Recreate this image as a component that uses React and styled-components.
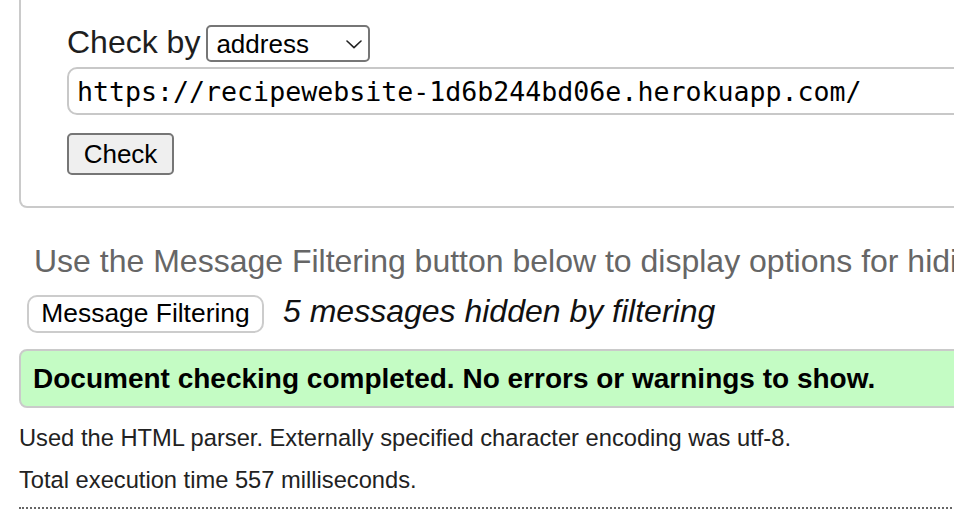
import React from "react";
import styled, { createGlobalStyle } from "styled-components";

const Global = createGlobalStyle`
  html, body { margin: 0; padding: 0; background: #fff; overflow: hidden; }
  body {
    font-family: "Liberation Sans", Arial, Helvetica, sans-serif;
    color: #222;
  }
`;

const Page = styled.main`
  width: 1400px;
  padding-left: 19px;
  box-sizing: border-box;
`;

const Panel = styled.form`
  border: 2px solid #cacaca;
  border-top: none;
  border-radius: 0 0 8px 8px;
  padding: 25px 0 31px 46px;
  display: flex;
  flex-direction: column;
  align-items: flex-start;
`;

const ModeRow = styled.div`
  display: flex;
  align-items: center;
  gap: 6px;
  height: 37px;
`;

const Label = styled.label`
  font-size: 32px;
  line-height: 37px;
  padding-bottom: 3px;
  color: #1e1e1e;
  white-space: nowrap;
`;

const SelectWrap = styled.div`
  position: relative;
  width: 164px;
  height: 37px;
`;

const Select = styled.select`
  appearance: none;
  -webkit-appearance: none;
  width: 100%;
  height: 100%;
  box-sizing: border-box;
  border: 2px solid #767676;
  border-radius: 5px;
  background: #fff;
  color: #000;
  font-family: "Liberation Sans", Arial, sans-serif;
  font-size: 26px;
  padding: 0 0 0 8px;
  margin: 0;
  outline: none;
`;

const Chevron = styled.svg`
  position: absolute;
  right: 8px;
  top: 15px;
  width: 16px;
  height: 9px;
  pointer-events: none;
`;

const UrlInput = styled.input`
  margin-top: 5px;
  width: 1300px;
  height: 48px;
  box-sizing: border-box;
  border: 2px solid #c8c8c8;
  border-radius: 10px;
  padding: 0 8px;
  font-family: "DejaVu Sans Mono", "Liberation Mono", monospace;
  font-size: 26.6px;
  color: #000;
  background: #fff;
  outline: none;
`;

const CheckButton = styled.button`
  margin-top: 18px;
  width: 107px;
  height: 42px;
  box-sizing: border-box;
  border: 2px solid #767676;
  border-radius: 5px;
  background: #efefef;
  color: #000;
  font-family: "Liberation Sans", Arial, sans-serif;
  font-size: 26px;
  padding: 0;
`;

const Hint = styled.p`
  margin: 34.5px 0 0 15px;
  font-size: 32px;
  line-height: 36.8px;
  color: #666;
  white-space: nowrap;
`;

const FilterRow = styled.div`
  margin-top: 15.7px;
  padding-left: 8px;
  display: flex;
  align-items: baseline;
  gap: 19px;
`;

const FilterButton = styled.button`
  width: 237px;
  height: 38px;
  box-sizing: border-box;
  border: 2px solid #cccccc;
  border-radius: 10px;
  background: #fff;
  color: #000;
  font-family: "Liberation Sans", Arial, sans-serif;
  font-size: 26.4px;
  padding: 0;
`;

const HiddenNote = styled.span`
  font-size: 32px;
  font-style: italic;
  line-height: 30px;
  color: #111;
  white-space: nowrap;
`;

const Result = styled.div`
  margin-top: 16px;
  border: 2px solid #cacaca;
  border-radius: 8px;
  background: #c4fcc4;
  padding: 11px 12px;
  font-size: 28px;
  font-weight: bold;
  line-height: 33px;
  color: #000;
  white-space: nowrap;
`;

const Info = styled.p`
  margin: ${(p) => p.$gap}px 0 0;
  font-size: 23.7px;
  line-height: 27.3px;
  color: #222;
  white-space: nowrap;
`;

const Rule = styled.hr`
  margin: 13px 0 0;
  border: none;
  border-top: 2px dotted #666;
  height: 0;
`;

export default function App() {
  return (
    <>
      <Global />
      <Page>
        <Panel onSubmit={(e) => e.preventDefault()}>
          <ModeRow>
            <Label htmlFor="docselect">Check by</Label>
            <SelectWrap>
              <Select id="docselect" defaultValue="address">
                <option value="address">address</option>
                <option value="file">file upload</option>
                <option value="text">text input</option>
              </Select>
              <Chevron viewBox="0 0 16 9" fill="none">
                <polyline
                  points="1,1 8,7.6 15,1"
                  stroke="#222"
                  strokeWidth="1.6"
                  strokeLinecap="round"
                  strokeLinejoin="round"
                />
              </Chevron>
            </SelectWrap>
          </ModeRow>
          <UrlInput
            type="url"
            defaultValue="https://recipewebsite-1d6b244bd06e.herokuapp.com/"
          />
          <CheckButton type="submit">Check</CheckButton>
        </Panel>
        <Hint>
          Use the Message Filtering button below to display options for hiding/showing particular messages, and to see total counts of errors and warnings.
        </Hint>
        <FilterRow>
          <FilterButton type="button">Message Filtering</FilterButton>
          <HiddenNote>5 messages hidden by filtering</HiddenNote>
        </FilterRow>
        <Result>Document checking completed. No errors or warnings to show.</Result>
        <Info $gap={17.2}>
          Used the HTML parser. Externally specified character encoding was utf-8.
        </Info>
        <Info $gap={14.5}>Total execution time 557 milliseconds.</Info>
        <Rule />
      </Page>
    </>
  );
}
